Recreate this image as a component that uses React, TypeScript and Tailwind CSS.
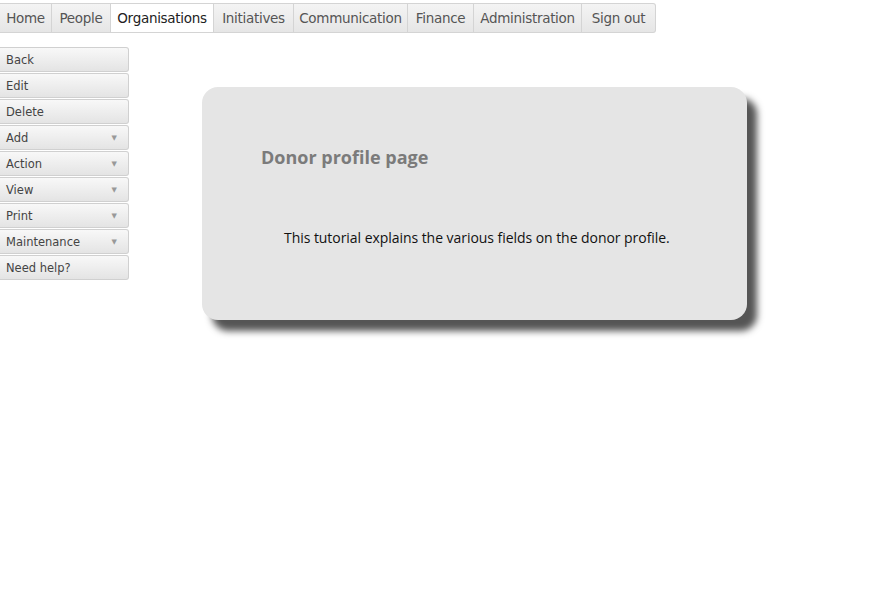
const tabs = [
  { label: "Home", w: "w-[52px]" },
  { label: "People", w: "w-[59px]" },
  { label: "Organisations", w: "w-[103px]", active: true },
  { label: "Initiatives", w: "w-[80px]" },
  { label: "Communication", w: "w-[114px]" },
  { label: "Finance", w: "w-[66px]" },
  { label: "Administration", w: "w-[108px]" },
  { label: "Sign out", w: "w-[74px]" },
];

const menu = [
  { label: "Back" },
  { label: "Edit" },
  { label: "Delete" },
  { label: "Add", arrow: true },
  { label: "Action", arrow: true },
  { label: "View", arrow: true },
  { label: "Print", arrow: true },
  { label: "Maintenance", arrow: true },
  { label: "Need help?" },
];

const App: React.FC = () => {
  return (
    <div className="w-[886px] h-[609px] bg-white font-['DejaVu_Sans',Verdana,sans-serif] overflow-hidden">
      {/* top tabs */}
      <div className="flex pt-[3px]">
        {tabs.map((t, i) => (
          <div
            key={t.label}
            className={`${t.w} h-[30px] flex items-center justify-center text-[13.5px] border-y border-r border-[#d4d4d4] ${
              i === 0 ? "border-l-0" : ""
            } ${i === tabs.length - 1 ? "rounded-tr-[3px] rounded-br-[3px]" : ""} ${
              t.active ? "bg-white text-[#222]" : "text-[#555] bg-gradient-to-b from-[#f4f4f4] to-[#e6e6e6]"
            }`}
          >
            <span className="tracking-[-0.3px] pt-px">{t.label}</span>
          </div>
        ))}
      </div>

      <div className="flex">
        {/* side menu */}
        <div className="mt-[14px] w-[129px] flex flex-col">
          {menu.map((m) => (
            <div
              key={m.label}
              className="h-[25px] mb-px flex items-center justify-between pl-[6px] pr-[11px] pt-[2px] text-[11.5px] text-[#444] border border-l-0 border-[#d0d0d0] rounded-r-[3px] bg-gradient-to-b from-[#f8f8f8] to-[#e4e4e4]"
            >
              <span>{m.label}</span>
              {m.arrow && <span className="text-[7px] text-[#999]">▼</span>}
            </div>
          ))}
        </div>

        {/* card */}
        <div className="ml-[73px] mt-[54px]">
          <div className="w-[545px] h-[233px] rounded-[16px] bg-[#e5e5e5] shadow-[10px_11px_7px_#555] font-['Open_Sans','Noto_Sans',sans-serif]">
            <div className="pl-[59px] pt-[58px] text-[18px] font-bold text-[#7b7b7b] leading-[24px]">
              Donor profile page
            </div>
            <div className="pl-[82px] pt-[59px] text-[14px] text-[#111] leading-[20px] tracking-[-0.05px]">
              This tutorial explains the various fields on the donor profile.
            </div>
          </div>
        </div>
      </div>
    </div>
  );
};

export default App;
